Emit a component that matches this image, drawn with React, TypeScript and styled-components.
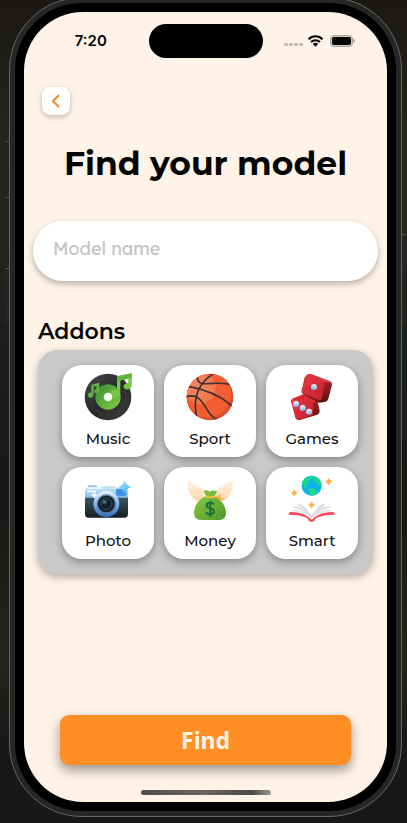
import React from "react";
import styled, { createGlobalStyle } from "styled-components";

const GlobalStyle = createGlobalStyle`
  *, *::before, *::after { box-sizing: border-box; }
  body {
    margin: 0;
    font-family: Montserrat, Inter, sans-serif;
    color: #050505;
    background: linear-gradient(180deg, #1b1814 0, #25251a 130px, #24261a 240px, #1a1e1c 360px, #171814 500px, #24251a 660px, #181818 740px);
  }
  button, input { font: inherit; }
`;

const Desk = styled.div`
  display: flex;
  min-height: 100vh;
  padding: 0 5px 6px 9px;
  overflow: hidden;
`;

const Phone = styled.div`
  position: relative;
  display: flex;
  flex: 1;
  margin-top: -3px;
  padding: 5px;
  border: 1px solid #666;
  border-radius: 73px;
  background: #262626;
`;

const SideKey = styled.span<{ $side: "left" | "right"; $top: number; $length: number }>`
  position: absolute;
  ${({ $side }) => $side}: -5px;
  top: ${({ $top }) => $top}px;
  width: 4px;
  height: ${({ $length }) => $length}px;
  border-top: 1px solid #505050;
  background: #242424;
`;

const Bezel = styled.div`
  display: flex;
  flex: 1;
  padding: 9px;
  border-radius: 67px;
  background: #000;
`;

const Screen = styled.main`
  display: flex;
  flex: 1;
  flex-direction: column;
  min-width: 0;
  padding: 12px 9px 7px;
  border-radius: 59px;
  background: #fff2e6;
`;

const StatusBar = styled.header`
  display: grid;
  grid-template-columns: 1fr 114px 1fr;
  align-items: center;
  height: 34px;
`;

const Clock = styled.time`
  justify-self: center;
  font: 600 15px/20px Inter, sans-serif;
`;

const Island = styled.div`
  height: 34px;
  border-radius: 17px;
  background: #000;
`;

const StatusIcons = styled.div`
  display: flex;
  justify-content: center;
`;

const BackButton = styled.button`
  display: grid;
  place-items: center;
  align-self: flex-start;
  width: 28px;
  height: 28px;
  margin: 29px 0 0 9px;
  padding: 0;
  border: 0;
  border-radius: 8px;
  background: #fff;
  box-shadow: 0 2px 5px rgba(0, 0, 0, 0.25);
`;

const Title = styled.h1`
  margin: 26px 0 0;
  font-size: 33px;
  font-weight: 700;
  line-height: 44px;
  text-align: center;
  white-space: nowrap;
`;

const NameField = styled.input`
  width: 100%;
  height: 60px;
  margin-top: 36px;
  padding: 0 20px 6px;
  border: 0;
  border-radius: 30px;
  outline: 0;
  background: #fff;
  box-shadow: 0 3px 6px rgba(0, 0, 0, 0.28);
  font-family: Lexend, Lato, sans-serif;
  font-size: 18px;
  &::placeholder { color: #c4c4c4; opacity: 1; }
`;

const Addons = styled.section`
  margin: 36px 5px 0;
`;

const SectionTitle = styled.h2`
  margin: 0;
  font-size: 22px;
  font-weight: 600;
  line-height: 30px;
`;

const AddonGrid = styled.div`
  display: grid;
  grid-template-columns: repeat(3, 1fr);
  gap: 10px;
  margin-top: 3px;
  padding: 15px 15px 15px 24px;
  border-radius: 20px;
  background: #c9c9c9;
  box-shadow: 0 3px 9px rgba(0, 0, 0, 0.3);
`;

const AddonCard = styled.button`
  display: flex;
  flex-direction: column;
  align-items: center;
  gap: 8px;
  height: 92px;
  padding: 8px 0 0;
  border: 0;
  border-radius: 20px;
  background: #fff;
  color: #111;
  box-shadow: 0 3px 9px rgba(0, 0, 0, 0.35);
  font-size: 15px;
  font-weight: 500;
  line-height: 20px;
`;

const FindButton = styled.button`
  height: 50px;
  margin: auto 27px 0;
  border: 0;
  border-radius: 9px;
  background: #ff8f24;
  color: #fff2e6;
  box-shadow: 0 5px 12px rgba(0, 0, 0, 0.4);
  font-family: "Noto Sans", sans-serif;
  font-size: 23px;
  font-weight: 700;
`;

const HomeBar = styled.div`
  align-self: center;
  width: 130px;
  height: 5px;
  margin-top: 25px;
  border-radius: 3px;
  background: linear-gradient(90deg, #514d4a 0, #6c6661 50%, #4d4946 85%, #9f9790 100%);
`;

const Drawing = ({ x = 72, children }: { x?: number; children: React.ReactNode }) => (
  <svg width="48" height="48" viewBox={`${x} 39 144 144`} aria-hidden="true">
    {children}
  </svg>
);

const MusicIcon = () => (
  <Drawing>
    <defs>
      <linearGradient id="vinyl" x1="0" y1="0" x2="1" y2="1">
        <stop offset="0" stopColor="#484848" /><stop offset=".5" stopColor="#292929" /><stop offset="1" stopColor="#3c3c3c" />
      </linearGradient>
      <linearGradient id="leaf" x1="0" y1="0" x2="1" y2="1">
        <stop offset="0" stopColor="#398a31" /><stop offset="1" stopColor="#80cf48" />
      </linearGradient>
    </defs>
    <circle cx="144" cy="111" r="70" fill="url(#vinyl)" />
    <circle cx="144" cy="111" r="54" fill="none" stroke="#404040" strokeWidth="2" />
    <circle cx="144" cy="111" r="38" fill="url(#leaf)" />
    <path d="M171 49l44-9v36c0 14-22 17-24 5-1-8 7-12 14-12V56l-24 5v37c-2 18-29 21-31 6-1-13 12-18 21-15z" fill="#75c647" />
    <path d="M171 49l44-9v15l-44 9z" fill="#60b73e" />
    <path d="M94 74l24-6v8l-17 4v22c0 14-17 15-17 4 0-7 6-10 10-8zM109 78l9-2v14c0 12-16 13-15 3 1-5 3-6 6-6z" fill="#5db244" />
    <circle cx="144" cy="111" r="13" fill="#f6fff0" />
  </Drawing>
);

const SportIcon = () => (
  <Drawing>
    <clipPath id="ball"><circle cx="144" cy="111" r="70" /></clipPath>
    <g clipPath="url(#ball)">
      <path d="M70 38h150v150H70z" fill="#dc4e2d" />
      <circle cx="137" cy="103" r="70" fill="#f45c31" />
      <circle cx="113" cy="84" r="48" fill="#f4774e" />
      <circle cx="105" cy="75" r="38" fill="#f58763" opacity=".65" />
      <g fill="none" stroke="#3c3230" strokeWidth="5">
        <path d="M156 40c-48 29-64 75-52 133" />
        <path d="M105 49c3 22 12 23 31 22 27-2 47-2 68 2" />
        <path d="M79 79c49 8 92 25 132 59" />
        <path d="M72 111c56-20 55 58 98 69" />
      </g>
    </g>
  </Drawing>
);

const GamesIcon = () => (
  <Drawing x={78}>
    <defs>
      <linearGradient id="die" x1="0" y1="0" x2="1" y2="1">
        <stop stopColor="#ee3948" /><stop offset="1" stopColor="#bd202b" />
      </linearGradient>
      <linearGradient id="side" x1="0" y1="0" x2="0" y2="1">
        <stop stopColor="#c3202d" /><stop offset="1" stopColor="#54130e" />
      </linearGradient>
      <linearGradient id="pip" x1="0" y1="0" x2="0" y2="1">
        <stop stopColor="#f0faff" /><stop offset="1" stopColor="#7eaee9" />
      </linearGradient>
    </defs>
    <path d="M127 103l38 11 8 38q1 8-7 12l-53 16q-8 2-11-7l-13-45q-2-8 5-11z" fill="url(#side)" />
    <path d="M87 124q0-8 9-8l50 14q9 4 9 11l-2 24-40 14q-10 2-13-6z" fill="url(#die)" />
    <path d="M89 117l36-15 46 14-20 15z" fill="#d42b37" />
    <path d="M137 44q4-4 10-2l57 22q7 3 6 10l-11 42q-3 9-11 10l-17 2-47-25q-6-3-5-9l9-42z" fill="url(#side)" />
    <path d="M133 46q4-6 12-3l37 17q8 4 6 12l-8 43q-3 9-11 6l-45-20q-6-4-5-11z" fill="url(#die)" />
    <path d="M142 42l58 20q8 3 9 7l-23-4z" fill="#e33c49" />
    {[[156, 81], [102, 132], [122, 144], [141, 155]].map(([cx, cy]) => (
      <circle key={cx} cx={cx} cy={cy} r="9" fill="url(#pip)" />
    ))}
  </Drawing>
);

const PhotoIcon = () => (
  <Drawing>
    <defs>
      <linearGradient id="shell" x1="0" y1="0" x2="0" y2="1">
        <stop stopColor="#c5e6fa" /><stop offset=".32" stopColor="#82bee9" /><stop offset=".35" stopColor="#3c5360" /><stop offset="1" stopColor="#161c22" />
      </linearGradient>
      <linearGradient id="ring" x1="0" y1="0" x2="0" y2="1">
        <stop stopColor="#eaf6ff" /><stop offset=".5" stopColor="#80b3e9" /><stop offset="1" stopColor="#276fba" />
      </linearGradient>
      <linearGradient id="spark" x1="0" y1="0" x2="1" y2="1">
        <stop stopColor="#a8eaff" /><stop offset="1" stopColor="#41aaf1" />
      </linearGradient>
    </defs>
    <path d="M83 80v-6q1-4 6-4h18q5 0 5 6v6z" fill="#91c5e9" />
    <rect x="75" y="77" width="129" height="90" rx="11" fill="url(#shell)" />
    <path d="M83 78h45M81 88h27" stroke="#f4fbff" strokeWidth="5" />
    <path d="M120 78l8-5h34l8 5z" fill="#c0dff6" />
    <rect x="168" y="80" width="31" height="22" rx="5" fill="#3d94df" />
    <circle cx="139" cy="126" r="39" fill="url(#ring)" />
    <circle cx="139" cy="126" r="29" fill="#5c7890" />
    <circle cx="139" cy="126" r="25" fill="#15222d" />
    <circle cx="139" cy="126" r="17" fill="none" stroke="#354f60" strokeWidth="3" />
    <circle cx="134" cy="120" r="7" fill="#3d6070" />
    <path d="M194 55q4 16 20 20-16 5-20 21-5-16-20-21 15-4 20-20z" fill="url(#spark)" />
    <path d="M103 89q2 8 10 10-8 3-10 11-3-8-11-11 8-2 11-10z" fill="#eff9ff" />
  </Drawing>
);

const MoneyIcon = () => (
  <Drawing>
    <defs>
      <linearGradient id="wing" x1="0" y1="0" x2="0" y2="1">
        <stop stopColor="#fffcf6" /><stop offset="1" stopColor="#ffd3a4" />
      </linearGradient>
      <linearGradient id="bag" x1="0" y1="0" x2="1" y2="1">
        <stop stopColor="#91cc45" /><stop offset="1" stopColor="#4b9929" />
      </linearGradient>
    </defs>
    {["", "translate(288 0) scale(-1 1)"].map((transform) => (
      <g key={transform} transform={transform}>
        <path d="M76 52q25 10 47 30l5 26-18 10q-12-1-14-9-10-3-9-12-8-4-6-12-6-10-5-33z" fill="url(#wing)" />
        <path d="M77 64q21 11 42 31M76 79q20 7 40 24M82 94q16 2 33 13" fill="none" stroke="#ffdfbb" strokeWidth="4" />
      </g>
    ))}
    <path d="M132 101l-8-13q2-4 9-3 6 0 11 4 7-6 13-3l9 2-8 14q31 18 34 48 1 24-20 24h-55q-22-1-21-24 2-31 36-49z" fill="url(#bag)" />
    <path d="M129 103q16 5 32 0" fill="none" stroke="#f3bd3a" strokeWidth="5" />
    <path d="M163 103l12-8 1 13 14 2-17 5z" fill="#ffb62f" />
    <path d="M156 127q-6-6-13-5-10 2-9 9 1 6 11 8 12 3 11 11-2 7-13 7-8-1-12-6M145 116v49" fill="none" stroke="#16733b" strokeWidth="6" />
  </Drawing>
);

const SmartIcon = () => (
  <Drawing x={78}>
    <clipPath id="earth"><circle cx="149" cy="71" r="30" /></clipPath>
    <g clipPath="url(#earth)">
      <path d="M118 40h62v62h-62z" fill="#08b6ed" />
      <path d="M118 50l18-12 14 4-2 9-9 3 4 8-9 5 4 8-9 2-7-10-7-4zM157 43l22 10v23l-10-6-4-10-9 1-4-7zM143 77l17 3 6 8-11 14-11-2-1-10-5-8z" fill="#1ed58b" />
    </g>
    <g fill="#ffb54b">
      {[[200, 59], [97, 93], [149, 129]].map(([x, y]) => (
        <path key={x} d={`M${x} ${y - 11}q3 8 11 11-8 3-11 11-3-8-11-11 8-3 11-11z`} />
      ))}
    </g>
    <path d="M106 124l20 8 23 29 22-29 20-8-34 47-8 5-8-5z" fill="#dedfe3" />
    <path d="M94 132q36 1 55 35 19-34 55-35l-7 8q-34 5-48 32-14-27-48-32z" fill="#e9eaed" />
    <path d="M90 143q40 0 59 29 19-29 59-29v8q-40 0-59 24-19-24-59-24z" fill="#f4f4f6" />
    <path d="M94 135q37 4 55 34 18-30 55-34M112 127q24 13 37 40 13-27 37-40M91 145q40 0 58 26 18-26 58-26" fill="none" stroke="#cdced4" strokeWidth="2" />
    <path d="M84 150q40 0 56 13l9 8 9-8q16-13 56-13 5 2 4 8-35 0-56 10-3 10-13 12-10-2-13-12-21-10-56-10-1-6 4-8z" fill="#f34d5b" />
    <path d="M91 149q40-2 58 20 18-22 58-20-39 2-58 25-19-23-58-25z" fill="#fafafa" />
  </Drawing>
);

const addons = [
  { label: "Music", Icon: MusicIcon },
  { label: "Sport", Icon: SportIcon },
  { label: "Games", Icon: GamesIcon },
  { label: "Photo", Icon: PhotoIcon },
  { label: "Money", Icon: MoneyIcon },
  { label: "Smart", Icon: SmartIcon },
];

export default function App() {
  return (
    <>
      <GlobalStyle />
      <Desk>
        <Phone>
          <SideKey $side="left" $top={143} $length={31} />
          <SideKey $side="left" $top={199} $length={56} />
          <SideKey $side="left" $top={270} $length={56} />
          <SideKey $side="right" $top={236} $length={90} />
          <Bezel>
            <Screen>
              <StatusBar>
                <Clock>7:20</Clock>
                <Island />
                <StatusIcons>
                  <svg width="72" height="14" viewBox="0 0 72 14" aria-hidden="true">
                    <g fill="#c6bdb3">
                      <rect x="0" y="9" width="4" height="3" rx="1" /><rect x="5" y="9" width="4" height="3" rx="1" />
                      <rect x="10" y="9" width="4" height="3" rx="1" /><rect x="15" y="9" width="4" height="3" rx="1" />
                    </g>
                    <g fill="none" stroke="#050505" strokeWidth="2">
                      <path d="M24.500 5.200a9.800 9.800 0 0 1 14 0M27 8a6.400 6.400 0 0 1 9 0" />
                    </g>
                    <path d="M31.500 12.800l-2.700-2.700a4 4 0 0 1 5.400 0z" fill="#050505" />
                    <rect x="46.500" y="1.500" width="22" height="11" rx="3.500" fill="#d5cac0" stroke="#aaa29a" />
                    <rect x="48" y="3" width="19" height="8" rx="2" fill="#050505" />
                    <path d="M70 5.500q1.600 1.500 0 3z" fill="#aaa29a" stroke="#aaa29a" />
                  </svg>
                </StatusIcons>
              </StatusBar>
              <BackButton type="button" aria-label="Back">
                <svg width="14" height="14" viewBox="0 0 14 14" aria-hidden="true">
                  <path d="M10 1L4 7l6 6" fill="none" stroke="#f28a25" strokeWidth="2" />
                </svg>
              </BackButton>
              <Title>Find your model</Title>
              <NameField type="text" placeholder="Model name" aria-label="Model name" />
              <Addons aria-labelledby="addons-title">
                <SectionTitle id="addons-title">Addons</SectionTitle>
                <AddonGrid>
                  {addons.map(({ label, Icon }) => (
                    <AddonCard key={label} type="button">
                      <Icon />
                      {label}
                    </AddonCard>
                  ))}
                </AddonGrid>
              </Addons>
              <FindButton type="button">Find</FindButton>
              <HomeBar />
            </Screen>
          </Bezel>
        </Phone>
      </Desk>
    </>
  );
}
